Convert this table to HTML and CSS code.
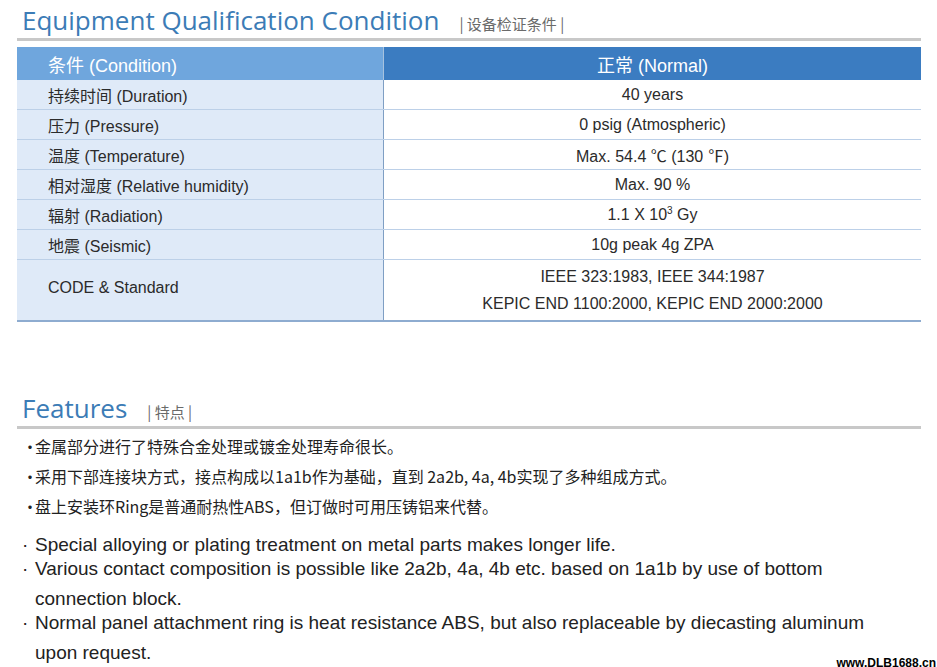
FILE: index.html
```html
<!DOCTYPE html>
<html lang="zh">
<head>
<meta charset="utf-8">
<link rel="stylesheet" href="styles.css">
</head>
<body>
<div class="page">
  <section class="sec">
    <h2 class="title"><span class="t-en">Equipment Qualification Condition</span><span class="t-zh">| 设备检证条件 |</span></h2>
    <table class="spec">
      <thead>
        <tr><th class="c1">条件 (Condition)</th><th class="c2">正常 (Normal)</th></tr>
      </thead>
      <tbody>
        <tr><td class="c1">持续时间 (Duration)</td><td class="c2">40 years</td></tr>
        <tr><td class="c1">压力 (Pressure)</td><td class="c2">0 psig (Atmospheric)</td></tr>
        <tr><td class="c1">温度 (Temperature)</td><td class="c2">Max. 54.4 ℃ (130 ℉)</td></tr>
        <tr><td class="c1">相对湿度 (Relative humidity)</td><td class="c2">Max. 90 %</td></tr>
        <tr><td class="c1">辐射 (Radiation)</td><td class="c2">1.1 X 10<sup>3</sup> Gy</td></tr>
        <tr><td class="c1">地震 (Seismic)</td><td class="c2">10g peak 4g ZPA</td></tr>
        <tr class="tall"><td class="c1">CODE &amp; Standard</td><td class="c2">IEEE 323:1983, IEEE 344:1987<br>KEPIC END 1100:2000, KEPIC END 2000:2000</td></tr>
      </tbody>
    </table>
  </section>

  <section class="sec feat">
    <h2 class="title"><span class="t-en">Features</span><span class="t-zh">| 特点 |</span></h2>
    <ul class="zh-list">
      <li>金属部分进行了特殊合金处理或镀金处理寿命很长。</li>
      <li>采用下部连接块方式，接点构成以1a1b作为基础，直到 2a2b, 4a, 4b实现了多种组成方式。</li>
      <li>盘上安装环Ring是普通耐热性ABS，但订做时可用压铸铝来代替。</li>
    </ul>
    <ul class="en-list">
      <li>Special alloying or plating treatment on metal parts makes longer life.</li>
      <li>Various contact composition is possible like 2a2b, 4a, 4b etc. based on 1a1b by use of bottom connection block.</li>
      <li>Normal panel attachment ring is heat resistance ABS, but also replaceable by diecasting aluminum upon request.</li>
    </ul>
  </section>
</div>
<div class="watermark">www.DLB1688.cn</div>
</body>
</html>
```

FILE: styles.css
```css
html, body {
  margin: 0;
  padding: 0;
  background: #fff;
}
body {
  width: 937px;
  height: 667px;
  overflow: hidden;
  position: relative;
  font-family: "Liberation Sans", "Noto Sans CJK SC", sans-serif;
  color: #2a2a2a;
}
.page {
  padding: 3px 16px 0 17px;
}
.title {
  margin: 0;
  display: flex;
  align-items: baseline;
  border-bottom: 3px solid #c8c8c8;
  padding: 0 0 0 5px;
  font-weight: normal;
  width: 899px;
  height: 35px;
  line-height: 35px;
}
.t-en {
  font-family: "Open Sans", "Noto Sans", sans-serif;
  font-size: 26px;
  color: #3c7cb6;
}
.t-zh {
  font-family: "Noto Sans CJK SC", sans-serif;
  font-size: 15px;
  line-height: 18px;
  color: #6a6a6a;
  margin-left: 20px;
}
.spec {
  margin-top: 6px;
  width: 904px;
  border-collapse: collapse;
  font-size: 16px;
  color: #2b2b2b;
}
.spec th {
  height: 33px;
  font-weight: normal;
  font-size: 18px;
  color: #fff;
  padding: 0;
}
.spec th.c1 {
  background: #6fa6dd;
  text-align: left;
  padding-left: 31px;
  width: 335px;
  border-right: 1px solid #a6c2df;
}
.spec th.c2 {
  background: #3b7cc1;
  text-align: center;
}
.spec td {
  height: 29px;
  padding: 0;
  border-bottom: 1px solid #bcd0e8;
}
.spec td.c1 {
  background: #dfeaf8;
  padding-left: 31px;
  border-right: 1px solid #7f9fc4;
}
.spec td.c2 {
  text-align: center;
}
.spec tr.tall td {
  border-bottom: 2px solid #8eacd0;
  line-height: 27px;
}
.spec tr.tall td.c2 {
  height: 60px;
}
.spec tr.tall td.c1 {
  height: 54px;
  padding-bottom: 6px;
}
.spec sup {
  font-size: 10px;
  vertical-align: 6px;
  line-height: 0;
}
.feat {
  margin-top: 69px;
}
.zh-list, .en-list {
  list-style: none;
  margin: 0;
  padding: 0 0 0 5px;
}
.zh-list {
  margin-top: 2px;
  font-family: "Noto Sans CJK SC", sans-serif;
  font-size: 16px;
  line-height: 30px;
  color: #222;
}
.zh-list li::before {
  content: "·";
  display: inline-block;
  width: 13px;
}
.en-list {
  margin-top: 9px;
  font-size: 19px;
  line-height: 30px;
  color: #222;
  width: 870px;
}
.en-list li {
  padding-left: 13px;
  text-indent: -13px;
}
.en-list li::before {
  content: "·";
  display: inline-block;
  width: 13px;
  text-indent: 0;
}
.en-list li + li {
  margin-top: -6px;
}
.watermark {
  position: absolute;
  right: 1px;
  bottom: -3px;
  font-family: "Liberation Sans", sans-serif;
  font-weight: bold;
  font-size: 12px;
  color: #000;
}
```
